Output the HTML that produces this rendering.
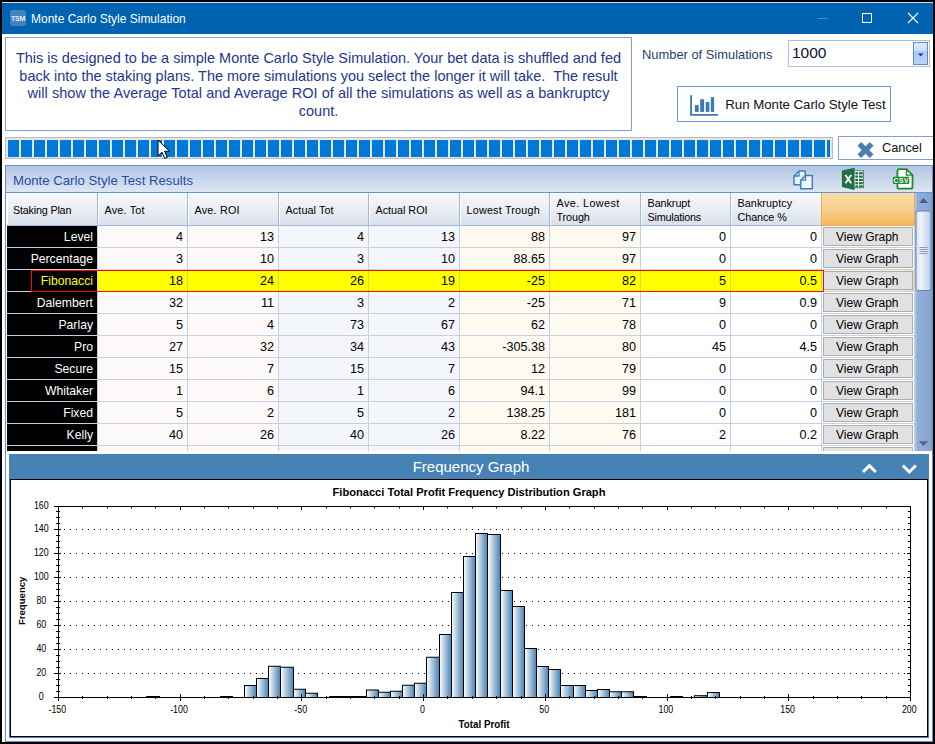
<!DOCTYPE html><html><head><meta charset="utf-8"><title>Monte Carlo Style Simulation</title><style>
*{box-sizing:border-box;margin:0;padding:0}
html,body{width:935px;height:744px;overflow:hidden;background:#fff}
body{position:relative;font-family:"Liberation Sans",sans-serif;color:#000}
.a{position:absolute}
.t{position:absolute;white-space:nowrap;line-height:1}
#frame{left:0;top:0;width:935px;height:744px;border:2px solid #000}
#tbar{left:2px;top:2px;width:931px;height:32px;background:#0063b1;border-top:1px solid #c9dcee}
#tico{left:10px;top:10px;width:16px;height:16px;border-radius:3px;background:#4583bf}
#desc{left:5px;top:37px;width:627px;height:94px;border:1px solid #7f9fd6;background:#fff}
.dl{position:absolute;left:0;width:625px;text-align:center;font-size:14.5px;color:#26368c;white-space:nowrap;line-height:17px}
#combo{left:788px;top:40px;width:142px;height:27px;border:1px solid #abc1e4;background:#fff}
#cbtn{left:913px;top:42px;width:15px;height:23px;border:1px solid #6a88bd;background:linear-gradient(#e0ebfd,#cddffb 36%,#abc9f8 38%,#b8d2fa)}
#run{left:677px;top:86px;width:214px;height:36px;border:1px solid #6f93d3;background:#fff}
#prog{left:5px;top:137px;width:828px;height:22px;border:1px solid #bcbcbc;background:#e6e6e6}
#cancel{left:838px;top:136px;width:97px;height:24px;border:1px solid #7f9fd6;background:#fff}
#panel{left:5px;top:165px;width:928px;height:577px;border:1px solid #6692d5;background:#fff}
#phead{left:6px;top:166px;width:926px;height:27px;background:linear-gradient(#b3c5e2,#c6d4ea 45%,#dde6f3);border-bottom:1px solid #6692d5}
#ghead{left:7px;top:193px;width:908px;height:33px;background:linear-gradient(#f5f7fb,#ebeff6 45%,#d8e0ed)}
.hc{position:absolute;top:193px;height:33px;border-right:1px solid #a3b7d6;border-bottom:1px solid #a3b7d6;box-shadow:inset 1px 1px 0 rgba(255,255,255,.8)}
.ht{position:absolute;white-space:nowrap;font-size:10.8px;line-height:1;color:#000}
.c{position:absolute;height:22px;border-right:1px solid #c5d0e4;border-bottom:1px solid #c5d0e4;font-size:12.6px;text-align:right;padding-right:4px;line-height:22px;white-space:nowrap}
.vb{position:absolute;left:823px;width:90px;height:19px;border:1px solid #adadad;background:#e1e1e1;font-size:12px;text-align:center;line-height:19px;padding-right:1.4px}
</style></head><body><div class="a" id="tbar"></div>
<div class="a" id="tico"></div><div class="t" style="left:10px;top:14.5px;width:16px;text-align:center;font-size:7px;font-weight:bold;color:#e4edf6;letter-spacing:-0.25px">TSM</div>
<div class="t" style="left:31px;top:13px;font-size:12px;color:#fff">Monte Carlo Style Simulation</div>
<svg class="a" style="left:810px;top:8px" width="120" height="20" viewBox="0 0 120 20"><path d="M7.5 10.5H17.5" stroke="#4b8fd0" stroke-width="1" fill="none"/><rect x="52.5" y="5.5" width="9" height="9" stroke="#fff" stroke-width="1" fill="none"/><path d="M98 5L108 15M108 5L98 15" stroke="#fff" stroke-width="1.1" fill="none"/></svg>
<div class="a" id="desc">
<div class="dl" style="top:12.0px;letter-spacing:0px">This is designed to be a simple Monte Carlo Style Simulation. Your bet data is shuffled and fed</div>
<div class="dl" style="top:29.5px;letter-spacing:0px">back into the staking plans. The more simulations you select the longer it will take.&nbsp; The result</div>
<div class="dl" style="top:47.0px;letter-spacing:0.035px">will show the Average Total and Average ROI of all the simulations as well as a bankruptcy</div>
<div class="dl" style="top:64.5px;letter-spacing:0px">count.</div>
</div>
<div class="t" style="left:642px;top:49px;font-size:12.9px;color:#27406f">Number of Simulations</div>
<div class="a" id="combo"></div><div class="t" style="left:792px;top:44.5px;font-size:15.5px;color:#101030">1000</div>
<div class="a" id="cbtn"></div><svg class="a" style="left:917px;top:52.5px" width="8" height="5"><path d="M1 0.4H6.4L3.7 3.6Z" fill="#1f3a7a"/></svg>
<div class="a" id="run"></div>
<svg class="a" style="left:689px;top:92px" width="30" height="26" viewBox="0 0 30 26"><path d="M2.1 3.2V22.9H28.9" stroke="#3c7ab5" stroke-width="1.9" fill="none"/><rect x="5.9" y="13.1" width="3.8" height="6.8" fill="#3c7ab5"/><rect x="11.2" y="7.2" width="3.9" height="12.7" fill="#3c7ab5"/><rect x="16.7" y="10" width="3.7" height="9.9" fill="#3c7ab5"/><rect x="21.8" y="5.2" width="3.3" height="14.7" fill="#3c7ab5"/></svg>
<div class="t" style="left:725.3px;top:97.7px;font-size:13.3px;letter-spacing:-0.05px;color:#111">Run Monte Carlo Style Test</div>
<div class="a" id="prog"></div>
<div class="a" style="left:8px;top:139.5px;width:11px;height:17.5px;background:#0078d7"></div><div class="a" style="left:21px;top:139.5px;width:11px;height:17.5px;background:#0078d7"></div><div class="a" style="left:34px;top:139.5px;width:11px;height:17.5px;background:#0078d7"></div><div class="a" style="left:47px;top:139.5px;width:11px;height:17.5px;background:#0078d7"></div><div class="a" style="left:60px;top:139.5px;width:11px;height:17.5px;background:#0078d7"></div><div class="a" style="left:73px;top:139.5px;width:11px;height:17.5px;background:#0078d7"></div><div class="a" style="left:86px;top:139.5px;width:11px;height:17.5px;background:#0078d7"></div><div class="a" style="left:99px;top:139.5px;width:11px;height:17.5px;background:#0078d7"></div><div class="a" style="left:112px;top:139.5px;width:11px;height:17.5px;background:#0078d7"></div><div class="a" style="left:125px;top:139.5px;width:11px;height:17.5px;background:#0078d7"></div><div class="a" style="left:138px;top:139.5px;width:11px;height:17.5px;background:#0078d7"></div><div class="a" style="left:151px;top:139.5px;width:11px;height:17.5px;background:#0078d7"></div><div class="a" style="left:164px;top:139.5px;width:11px;height:17.5px;background:#0078d7"></div><div class="a" style="left:177px;top:139.5px;width:11px;height:17.5px;background:#0078d7"></div><div class="a" style="left:190px;top:139.5px;width:11px;height:17.5px;background:#0078d7"></div><div class="a" style="left:203px;top:139.5px;width:11px;height:17.5px;background:#0078d7"></div><div class="a" style="left:216px;top:139.5px;width:11px;height:17.5px;background:#0078d7"></div><div class="a" style="left:229px;top:139.5px;width:11px;height:17.5px;background:#0078d7"></div><div class="a" style="left:242px;top:139.5px;width:11px;height:17.5px;background:#0078d7"></div><div class="a" style="left:255px;top:139.5px;width:11px;height:17.5px;background:#0078d7"></div><div class="a" style="left:268px;top:139.5px;width:11px;height:17.5px;background:#0078d7"></div><div class="a" style="left:281px;top:139.5px;width:11px;height:17.5px;background:#0078d7"></div><div class="a" style="left:294px;top:139.5px;width:11px;height:17.5px;background:#0078d7"></div><div class="a" style="left:307px;top:139.5px;width:11px;height:17.5px;background:#0078d7"></div><div class="a" style="left:320px;top:139.5px;width:11px;height:17.5px;background:#0078d7"></div><div class="a" style="left:333px;top:139.5px;width:11px;height:17.5px;background:#0078d7"></div><div class="a" style="left:346px;top:139.5px;width:11px;height:17.5px;background:#0078d7"></div><div class="a" style="left:359px;top:139.5px;width:11px;height:17.5px;background:#0078d7"></div><div class="a" style="left:372px;top:139.5px;width:11px;height:17.5px;background:#0078d7"></div><div class="a" style="left:385px;top:139.5px;width:11px;height:17.5px;background:#0078d7"></div><div class="a" style="left:398px;top:139.5px;width:11px;height:17.5px;background:#0078d7"></div><div class="a" style="left:411px;top:139.5px;width:11px;height:17.5px;background:#0078d7"></div><div class="a" style="left:424px;top:139.5px;width:11px;height:17.5px;background:#0078d7"></div><div class="a" style="left:437px;top:139.5px;width:11px;height:17.5px;background:#0078d7"></div><div class="a" style="left:450px;top:139.5px;width:11px;height:17.5px;background:#0078d7"></div><div class="a" style="left:463px;top:139.5px;width:11px;height:17.5px;background:#0078d7"></div><div class="a" style="left:476px;top:139.5px;width:11px;height:17.5px;background:#0078d7"></div><div class="a" style="left:489px;top:139.5px;width:11px;height:17.5px;background:#0078d7"></div><div class="a" style="left:502px;top:139.5px;width:11px;height:17.5px;background:#0078d7"></div><div class="a" style="left:515px;top:139.5px;width:11px;height:17.5px;background:#0078d7"></div><div class="a" style="left:528px;top:139.5px;width:11px;height:17.5px;background:#0078d7"></div><div class="a" style="left:541px;top:139.5px;width:11px;height:17.5px;background:#0078d7"></div><div class="a" style="left:554px;top:139.5px;width:11px;height:17.5px;background:#0078d7"></div><div class="a" style="left:567px;top:139.5px;width:11px;height:17.5px;background:#0078d7"></div><div class="a" style="left:580px;top:139.5px;width:11px;height:17.5px;background:#0078d7"></div><div class="a" style="left:593px;top:139.5px;width:11px;height:17.5px;background:#0078d7"></div><div class="a" style="left:606px;top:139.5px;width:11px;height:17.5px;background:#0078d7"></div><div class="a" style="left:619px;top:139.5px;width:11px;height:17.5px;background:#0078d7"></div><div class="a" style="left:632px;top:139.5px;width:11px;height:17.5px;background:#0078d7"></div><div class="a" style="left:645px;top:139.5px;width:11px;height:17.5px;background:#0078d7"></div><div class="a" style="left:658px;top:139.5px;width:11px;height:17.5px;background:#0078d7"></div><div class="a" style="left:671px;top:139.5px;width:11px;height:17.5px;background:#0078d7"></div><div class="a" style="left:684px;top:139.5px;width:11px;height:17.5px;background:#0078d7"></div><div class="a" style="left:697px;top:139.5px;width:11px;height:17.5px;background:#0078d7"></div><div class="a" style="left:710px;top:139.5px;width:11px;height:17.5px;background:#0078d7"></div><div class="a" style="left:723px;top:139.5px;width:11px;height:17.5px;background:#0078d7"></div><div class="a" style="left:736px;top:139.5px;width:11px;height:17.5px;background:#0078d7"></div><div class="a" style="left:749px;top:139.5px;width:11px;height:17.5px;background:#0078d7"></div><div class="a" style="left:762px;top:139.5px;width:11px;height:17.5px;background:#0078d7"></div><div class="a" style="left:775px;top:139.5px;width:11px;height:17.5px;background:#0078d7"></div><div class="a" style="left:788px;top:139.5px;width:11px;height:17.5px;background:#0078d7"></div><div class="a" style="left:801px;top:139.5px;width:11px;height:17.5px;background:#0078d7"></div><div class="a" style="left:814px;top:139.5px;width:11px;height:17.5px;background:#0078d7"></div><div class="a" style="left:827px;top:139.5px;width:3px;height:17.5px;background:#0078d7"></div>
<div class="a" id="cancel"></div>
<svg class="a" style="left:855px;top:140px" width="21" height="20" viewBox="0 0 21 20"><path d="M4.3 3.8L16.7 16.2M16.7 3.8L4.3 16.2" stroke="#4a7fb5" stroke-width="5.2" fill="none"/></svg>
<div class="t" style="left:882px;top:142px;font-size:12.8px;color:#111">Cancel</div>
<svg class="a" style="left:157px;top:139px" width="14" height="21" viewBox="0 0 14 21"><path d="M1 1V17L5 13.2L7.8 19.5L10.3 18.4L7.6 12.3H12.6Z" fill="#fff" stroke="#000" stroke-width="1"/></svg>
<div class="a" id="panel"></div><div class="a" id="phead"></div>
<div class="t" style="left:13px;top:174px;font-size:13.1px;letter-spacing:0.04px;color:#1f4fa3">Monte Carlo Style Test Results</div>
<svg class="a" style="left:792px;top:168px" width="24" height="24" viewBox="0 0 24 24"><g stroke-linejoin="round"><path d="M7 3H13.2V16.7H2V8Z" fill="#e9f0fa" stroke="#3f7fc0" stroke-width="1.5"/><path d="M7 3V8H2" fill="none" stroke="#3f7fc0" stroke-width="1.3"/><path d="M13.5 7.5H20.3V20.8H8.8V12.2Z" fill="#f2f6fc" stroke="#3f7fc0" stroke-width="1.5"/><path d="M13.5 7.5V12.2H8.8" fill="none" stroke="#3f7fc0" stroke-width="1.3"/></g></svg>
<svg class="a" style="left:841px;top:167px" width="25" height="24" viewBox="0 0 25 24"><rect x="12" y="3.8" width="10.6" height="16.9" fill="#fff" stroke="#2a7b4c" stroke-width="0.8"/><g fill="#1f7145"><rect x="14.3" y="5.2" width="2.8" height="2.2"/><rect x="18" y="5.2" width="3.8" height="2.2"/><rect x="14.3" y="8.5" width="2.8" height="2.2"/><rect x="18" y="8.5" width="3.8" height="2.2"/><rect x="14.3" y="11.8" width="2.8" height="2.2"/><rect x="18" y="11.8" width="3.8" height="2.2"/><rect x="14.3" y="15.1" width="2.8" height="2.2"/><rect x="18" y="15.1" width="3.8" height="2.2"/><rect x="14.3" y="18.3" width="2.8" height="1.8"/><rect x="18" y="18.3" width="3.8" height="1.8"/></g><path d="M0.9 3.5L13.6 0.8V23L0.9 20Z" fill="#1f7145"/><path d="M4.4 8L10.2 16.2M10.2 8L4.4 16.2" stroke="#fff" stroke-width="1.9"/></svg>
<svg class="a" style="left:891px;top:167px" width="24" height="24" viewBox="0 0 24 24"><path d="M8.4 2.1H15.5L21.5 8.1V19.7Q21.5 21.7 19.5 21.7H8.4Q6.4 21.7 6.4 19.7V4.1Q6.4 2.1 8.4 2.1Z" fill="#fff" stroke="#1e8c2e" stroke-width="1.8"/><path d="M15.5 2.1V8.1H21.5" fill="none" stroke="#1e8c2e" stroke-width="1.4"/><rect x="1.8" y="9.8" width="16.5" height="7.2" rx="1.2" fill="#1e8c2e"/><text x="10.2" y="15.9" font-size="6.6" font-weight="bold" fill="#fff" text-anchor="middle" letter-spacing="0.6" font-family="Liberation Sans, sans-serif">CSV</text></svg>
<div class="a" id="ghead"></div>
<div class="hc" style="left:7px;width:91px;"></div>
<div class="ht" style="left:13px;top:205.2px;letter-spacing:-0.2px">Staking Plan</div>
<div class="hc" style="left:98px;width:90px;"></div>
<div class="ht" style="left:104.5px;top:205.2px;letter-spacing:0.2px">Ave. Tot</div>
<div class="hc" style="left:188px;width:91px;"></div>
<div class="ht" style="left:194.5px;top:205.2px;letter-spacing:0.2px">Ave. ROI</div>
<div class="hc" style="left:279px;width:90px;"></div>
<div class="ht" style="left:285.5px;top:205.2px;letter-spacing:0.1px">Actual Tot</div>
<div class="hc" style="left:369px;width:91px;"></div>
<div class="ht" style="left:375.5px;top:205.2px;letter-spacing:-0.02px">Actual ROI</div>
<div class="hc" style="left:460px;width:90px;"></div>
<div class="ht" style="left:466.5px;top:205.2px;letter-spacing:0.2px">Lowest Trough</div>
<div class="hc" style="left:550px;width:91px;"></div>
<div class="ht" style="left:556.5px;top:198px;letter-spacing:0.42px">Ave. Lowest</div>
<div class="ht" style="left:556.5px;top:211.8px;letter-spacing:-0.1px">Trough</div>
<div class="hc" style="left:641px;width:90px;"></div>
<div class="ht" style="left:647.5px;top:198px;letter-spacing:-0.06px">Bankrupt</div>
<div class="ht" style="left:647.5px;top:211.8px;letter-spacing:-0.22px">Simulations</div>
<div class="hc" style="left:731px;width:91px;"></div>
<div class="ht" style="left:737.5px;top:198px;letter-spacing:0.06px">Bankruptcy</div>
<div class="ht" style="left:737.5px;top:211.8px;letter-spacing:-0.08px">Chance %</div>
<div class="hc" style="left:821px;width:94px;background:linear-gradient(#fadba6,#f8d08e 50%,#f5bd68 88%,#f3b359);border-left:1px solid #f0ac50;border-right:1px solid #eeaa52;border-bottom:1px solid #eeaa52;box-shadow:none;"></div>
<div class="a" style="left:7px;top:226px;width:908px;height:225px;overflow:hidden">
<div class="c" style="left:0px;top:0px;width:91px;background:#000;color:#fff;font-size:12.2px;">Level</div>
<div class="c" style="left:91px;top:0px;width:90px;background:#fdf9f8;color:#000;">4</div>
<div class="c" style="left:181px;top:0px;width:91px;background:#fdf9f8;color:#000;">13</div>
<div class="c" style="left:272px;top:0px;width:90px;background:#f4f6fb;color:#000;">4</div>
<div class="c" style="left:362px;top:0px;width:91px;background:#f4f6fb;color:#000;">13</div>
<div class="c" style="left:453px;top:0px;width:90px;background:#fffaf0;color:#000;">88</div>
<div class="c" style="left:543px;top:0px;width:91px;background:#fffaf0;color:#000;">97</div>
<div class="c" style="left:634px;top:0px;width:90px;background:#fff;color:#000;">0</div>
<div class="c" style="left:724px;top:0px;width:91px;background:#fff;color:#000;">0</div>
<div class="c" style="left:815px;top:0px;width:93px;background:#fff"></div>
<div class="vb" style="left:816px;top:1px">View Graph</div>
<div class="c" style="left:0px;top:22px;width:91px;background:#000;color:#fff;font-size:12.2px;">Percentage</div>
<div class="c" style="left:91px;top:22px;width:90px;background:#fdf9f8;color:#000;">3</div>
<div class="c" style="left:181px;top:22px;width:91px;background:#fdf9f8;color:#000;">10</div>
<div class="c" style="left:272px;top:22px;width:90px;background:#f4f6fb;color:#000;">3</div>
<div class="c" style="left:362px;top:22px;width:91px;background:#f4f6fb;color:#000;">10</div>
<div class="c" style="left:453px;top:22px;width:90px;background:#fffaf0;color:#000;">88.65</div>
<div class="c" style="left:543px;top:22px;width:91px;background:#fffaf0;color:#000;">97</div>
<div class="c" style="left:634px;top:22px;width:90px;background:#fff;color:#000;">0</div>
<div class="c" style="left:724px;top:22px;width:91px;background:#fff;color:#000;">0</div>
<div class="c" style="left:815px;top:22px;width:93px;background:#fff"></div>
<div class="vb" style="left:816px;top:23px">View Graph</div>
<div class="c" style="left:0px;top:44px;width:91px;background:#000;color:#ffff10;font-size:12.2px;">Fibonacci</div>
<div class="c" style="left:91px;top:44px;width:90px;background:#ffff00;color:#000;border-right:1px solid #d8d850;">18</div>
<div class="c" style="left:181px;top:44px;width:91px;background:#ffff00;color:#000;border-right:1px solid #d8d850;">24</div>
<div class="c" style="left:272px;top:44px;width:90px;background:#ffff00;color:#000;border-right:1px solid #d8d850;">26</div>
<div class="c" style="left:362px;top:44px;width:91px;background:#ffff00;color:#000;border-right:1px solid #d8d850;">19</div>
<div class="c" style="left:453px;top:44px;width:90px;background:#ffff00;color:#000;border-right:1px solid #d8d850;">-25</div>
<div class="c" style="left:543px;top:44px;width:91px;background:#ffff00;color:#000;border-right:1px solid #d8d850;">82</div>
<div class="c" style="left:634px;top:44px;width:90px;background:#ffff00;color:#000;border-right:1px solid #d8d850;">5</div>
<div class="c" style="left:724px;top:44px;width:91px;background:#ffff00;color:#000;border-right:1px solid #d8d850;">0.5</div>
<div class="c" style="left:815px;top:44px;width:93px;background:linear-gradient(90deg,#fdebc5,#fdebc5 88%,#fbd28a)"></div>
<div class="vb" style="left:816px;top:45px">View Graph</div>
<div class="c" style="left:0px;top:66px;width:91px;background:#000;color:#fff;font-size:12.2px;">Dalembert</div>
<div class="c" style="left:91px;top:66px;width:90px;background:#fdf9f8;color:#000;">32</div>
<div class="c" style="left:181px;top:66px;width:91px;background:#fdf9f8;color:#000;">11</div>
<div class="c" style="left:272px;top:66px;width:90px;background:#f4f6fb;color:#000;">3</div>
<div class="c" style="left:362px;top:66px;width:91px;background:#f4f6fb;color:#000;">2</div>
<div class="c" style="left:453px;top:66px;width:90px;background:#fffaf0;color:#000;">-25</div>
<div class="c" style="left:543px;top:66px;width:91px;background:#fffaf0;color:#000;">71</div>
<div class="c" style="left:634px;top:66px;width:90px;background:#fff;color:#000;">9</div>
<div class="c" style="left:724px;top:66px;width:91px;background:#fff;color:#000;">0.9</div>
<div class="c" style="left:815px;top:66px;width:93px;background:#fff"></div>
<div class="vb" style="left:816px;top:67px">View Graph</div>
<div class="c" style="left:0px;top:88px;width:91px;background:#000;color:#fff;font-size:12.2px;">Parlay</div>
<div class="c" style="left:91px;top:88px;width:90px;background:#fdf9f8;color:#000;">5</div>
<div class="c" style="left:181px;top:88px;width:91px;background:#fdf9f8;color:#000;">4</div>
<div class="c" style="left:272px;top:88px;width:90px;background:#f4f6fb;color:#000;">73</div>
<div class="c" style="left:362px;top:88px;width:91px;background:#f4f6fb;color:#000;">67</div>
<div class="c" style="left:453px;top:88px;width:90px;background:#fffaf0;color:#000;">62</div>
<div class="c" style="left:543px;top:88px;width:91px;background:#fffaf0;color:#000;">78</div>
<div class="c" style="left:634px;top:88px;width:90px;background:#fff;color:#000;">0</div>
<div class="c" style="left:724px;top:88px;width:91px;background:#fff;color:#000;">0</div>
<div class="c" style="left:815px;top:88px;width:93px;background:#fff"></div>
<div class="vb" style="left:816px;top:89px">View Graph</div>
<div class="c" style="left:0px;top:110px;width:91px;background:#000;color:#fff;font-size:12.2px;">Pro</div>
<div class="c" style="left:91px;top:110px;width:90px;background:#fdf9f8;color:#000;">27</div>
<div class="c" style="left:181px;top:110px;width:91px;background:#fdf9f8;color:#000;">32</div>
<div class="c" style="left:272px;top:110px;width:90px;background:#f4f6fb;color:#000;">34</div>
<div class="c" style="left:362px;top:110px;width:91px;background:#f4f6fb;color:#000;">43</div>
<div class="c" style="left:453px;top:110px;width:90px;background:#fffaf0;color:#000;">-305.38</div>
<div class="c" style="left:543px;top:110px;width:91px;background:#fffaf0;color:#000;">80</div>
<div class="c" style="left:634px;top:110px;width:90px;background:#fff;color:#000;">45</div>
<div class="c" style="left:724px;top:110px;width:91px;background:#fff;color:#000;">4.5</div>
<div class="c" style="left:815px;top:110px;width:93px;background:#fff"></div>
<div class="vb" style="left:816px;top:111px">View Graph</div>
<div class="c" style="left:0px;top:132px;width:91px;background:#000;color:#fff;font-size:12.2px;">Secure</div>
<div class="c" style="left:91px;top:132px;width:90px;background:#fdf9f8;color:#000;">15</div>
<div class="c" style="left:181px;top:132px;width:91px;background:#fdf9f8;color:#000;">7</div>
<div class="c" style="left:272px;top:132px;width:90px;background:#f4f6fb;color:#000;">15</div>
<div class="c" style="left:362px;top:132px;width:91px;background:#f4f6fb;color:#000;">7</div>
<div class="c" style="left:453px;top:132px;width:90px;background:#fffaf0;color:#000;">12</div>
<div class="c" style="left:543px;top:132px;width:91px;background:#fffaf0;color:#000;">79</div>
<div class="c" style="left:634px;top:132px;width:90px;background:#fff;color:#000;">0</div>
<div class="c" style="left:724px;top:132px;width:91px;background:#fff;color:#000;">0</div>
<div class="c" style="left:815px;top:132px;width:93px;background:#fff"></div>
<div class="vb" style="left:816px;top:133px">View Graph</div>
<div class="c" style="left:0px;top:154px;width:91px;background:#000;color:#fff;font-size:12.2px;">Whitaker</div>
<div class="c" style="left:91px;top:154px;width:90px;background:#fdf9f8;color:#000;">1</div>
<div class="c" style="left:181px;top:154px;width:91px;background:#fdf9f8;color:#000;">6</div>
<div class="c" style="left:272px;top:154px;width:90px;background:#f4f6fb;color:#000;">1</div>
<div class="c" style="left:362px;top:154px;width:91px;background:#f4f6fb;color:#000;">6</div>
<div class="c" style="left:453px;top:154px;width:90px;background:#fffaf0;color:#000;">94.1</div>
<div class="c" style="left:543px;top:154px;width:91px;background:#fffaf0;color:#000;">99</div>
<div class="c" style="left:634px;top:154px;width:90px;background:#fff;color:#000;">0</div>
<div class="c" style="left:724px;top:154px;width:91px;background:#fff;color:#000;">0</div>
<div class="c" style="left:815px;top:154px;width:93px;background:#fff"></div>
<div class="vb" style="left:816px;top:155px">View Graph</div>
<div class="c" style="left:0px;top:176px;width:91px;background:#000;color:#fff;font-size:12.2px;">Fixed</div>
<div class="c" style="left:91px;top:176px;width:90px;background:#fdf9f8;color:#000;">5</div>
<div class="c" style="left:181px;top:176px;width:91px;background:#fdf9f8;color:#000;">2</div>
<div class="c" style="left:272px;top:176px;width:90px;background:#f4f6fb;color:#000;">5</div>
<div class="c" style="left:362px;top:176px;width:91px;background:#f4f6fb;color:#000;">2</div>
<div class="c" style="left:453px;top:176px;width:90px;background:#fffaf0;color:#000;">138.25</div>
<div class="c" style="left:543px;top:176px;width:91px;background:#fffaf0;color:#000;">181</div>
<div class="c" style="left:634px;top:176px;width:90px;background:#fff;color:#000;">0</div>
<div class="c" style="left:724px;top:176px;width:91px;background:#fff;color:#000;">0</div>
<div class="c" style="left:815px;top:176px;width:93px;background:#fff"></div>
<div class="vb" style="left:816px;top:177px">View Graph</div>
<div class="c" style="left:0px;top:198px;width:91px;background:#000;color:#fff;font-size:12.2px;">Kelly</div>
<div class="c" style="left:91px;top:198px;width:90px;background:#fdf9f8;color:#000;">40</div>
<div class="c" style="left:181px;top:198px;width:91px;background:#fdf9f8;color:#000;">26</div>
<div class="c" style="left:272px;top:198px;width:90px;background:#f4f6fb;color:#000;">40</div>
<div class="c" style="left:362px;top:198px;width:91px;background:#f4f6fb;color:#000;">26</div>
<div class="c" style="left:453px;top:198px;width:90px;background:#fffaf0;color:#000;">8.22</div>
<div class="c" style="left:543px;top:198px;width:91px;background:#fffaf0;color:#000;">76</div>
<div class="c" style="left:634px;top:198px;width:90px;background:#fff;color:#000;">2</div>
<div class="c" style="left:724px;top:198px;width:91px;background:#fff;color:#000;">0.2</div>
<div class="c" style="left:815px;top:198px;width:93px;background:#fff"></div>
<div class="vb" style="left:816px;top:199px">View Graph</div>
<div class="c" style="left:0px;top:220px;width:91px;background:#000;color:#fff;font-size:12.2px;"></div>
<div class="c" style="left:91px;top:220px;width:90px;background:#fdf9f8;color:#000;"></div>
<div class="c" style="left:181px;top:220px;width:91px;background:#fdf9f8;color:#000;"></div>
<div class="c" style="left:272px;top:220px;width:90px;background:#f4f6fb;color:#000;"></div>
<div class="c" style="left:362px;top:220px;width:91px;background:#f4f6fb;color:#000;"></div>
<div class="c" style="left:453px;top:220px;width:90px;background:#fffaf0;color:#000;"></div>
<div class="c" style="left:543px;top:220px;width:91px;background:#fffaf0;color:#000;"></div>
<div class="c" style="left:634px;top:220px;width:90px;background:#fff;color:#000;"></div>
<div class="c" style="left:724px;top:220px;width:91px;background:#fff;color:#000;"></div>
<div class="c" style="left:815px;top:220px;width:93px;background:#fff"></div>
<div class="vb" style="left:816px;top:221px">View Graph</div>
<div class="a" style="left:24px;top:44px;width:793px;height:22px;border:1px solid #f80808"></div>
</div>
<div class="a" style="left:915px;top:193px;width:17px;height:258px;background:linear-gradient(90deg,#b4caea,#92aed8 14%,#8eabd6 55%,#819fcf)"></div>
<svg class="a" style="left:915px;top:193px" width="17" height="258" viewBox="0 0 17 258"><path d="M4 10H13L8.5 5.1Z" fill="#4d5d8c"/><path d="M3.8 248.3H13.2L8.5 253Z" fill="#56648a"/><defs><linearGradient id="th" x1="0" x2="1" y1="0" y2="0"><stop offset="0" stop-color="#d6e2f3"/><stop offset="0.3" stop-color="#f0f4fb"/><stop offset="0.65" stop-color="#d6e1f1"/><stop offset="1" stop-color="#b7c9e6"/></linearGradient></defs><rect x="1" y="18" width="15" height="79.5" rx="2" fill="url(#th)" stroke="#6381b8"/><path d="M4.5 54.5H12.5M4.5 56.5H12.5M4.5 58.5H12.5M4.5 60.5H12.5" stroke="#8b9dc2" stroke-width="1"/></svg>
<div class="a" style="left:6px;top:451px;width:926px;height:290px;background:#fff"></div>
<div class="a" style="left:9px;top:454px;width:920px;height:284px;background:#4682b4"></div>
<div class="t" style="left:9px;top:459px;width:920px;text-align:center;font-size:15px;color:#fff;padding-left:4px">Frequency Graph</div>
<svg class="a" style="left:858px;top:459px" width="64" height="18" viewBox="0 0 64 18"><path d="M5 13L11.4 6.6L17.8 13" stroke="#fff" stroke-width="3" fill="none"/><path d="M44.8 6.5L51.3 13L57.8 6.5" stroke="#fff" stroke-width="3" fill="none"/></svg>
<div class="a" style="left:10px;top:478.6px;width:918px;height:258.4px;background:#fff;border:1px solid #000;border-top-width:1.2px"></div>
<svg class="a" style="left:0;top:480px" width="935" height="256" viewBox="0 480 935 256" font-family="Liberation Sans, sans-serif"><defs><linearGradient id="bg" x1="0" x2="1" y1="0" y2="0"><stop offset="0" stop-color="#ffffff"/><stop offset="1" stop-color="#4682b4"/></linearGradient></defs><text x="469" y="496" font-size="11.1" font-weight="bold" text-anchor="middle" fill="#000">Fibonacci Total Profit Frequency Distribution Graph</text><path d="M58.0 673.5H910.5" stroke="#000" stroke-width="1" stroke-dasharray="1 5" fill="none"/><path d="M58.0 649.5H910.5" stroke="#000" stroke-width="1" stroke-dasharray="1 5" fill="none"/><path d="M58.0 625.5H910.5" stroke="#000" stroke-width="1" stroke-dasharray="1 5" fill="none"/><path d="M58.0 601.5H910.5" stroke="#000" stroke-width="1" stroke-dasharray="1 5" fill="none"/><path d="M58.0 577.5H910.5" stroke="#000" stroke-width="1" stroke-dasharray="1 5" fill="none"/><path d="M58.0 553.5H910.5" stroke="#000" stroke-width="1" stroke-dasharray="1 5" fill="none"/><path d="M58.0 529.5H910.5" stroke="#000" stroke-width="1" stroke-dasharray="1 5" fill="none"/><rect x="146.5" y="696.50" width="13.0" height="1.00" fill="url(#bg)" stroke="#000" stroke-width="1"/><rect x="220.5" y="696.50" width="12.0" height="1.00" fill="url(#bg)" stroke="#000" stroke-width="1"/><rect x="244.5" y="685.50" width="12.0" height="12.00" fill="url(#bg)" stroke="#000" stroke-width="1"/><rect x="256.5" y="678.50" width="12.0" height="19.00" fill="url(#bg)" stroke="#000" stroke-width="1"/><rect x="268.5" y="666.25" width="12.0" height="31.25" fill="url(#bg)" stroke="#000" stroke-width="1"/><rect x="280.5" y="667.25" width="13.0" height="30.25" fill="url(#bg)" stroke="#000" stroke-width="1"/><rect x="293.5" y="689.25" width="12.0" height="8.25" fill="url(#bg)" stroke="#000" stroke-width="1"/><rect x="305.5" y="693.25" width="12.0" height="4.25" fill="url(#bg)" stroke="#000" stroke-width="1"/><rect x="329.5" y="696.50" width="12.0" height="1.00" fill="url(#bg)" stroke="#000" stroke-width="1"/><rect x="341.5" y="696.50" width="12.0" height="1.00" fill="url(#bg)" stroke="#000" stroke-width="1"/><rect x="353.5" y="696.50" width="13.0" height="1.00" fill="url(#bg)" stroke="#000" stroke-width="1"/><rect x="366.5" y="690.00" width="12.0" height="7.50" fill="url(#bg)" stroke="#000" stroke-width="1"/><rect x="378.5" y="692.25" width="12.0" height="5.25" fill="url(#bg)" stroke="#000" stroke-width="1"/><rect x="390.5" y="691.25" width="12.0" height="6.25" fill="url(#bg)" stroke="#000" stroke-width="1"/><rect x="402.5" y="685.25" width="12.0" height="12.25" fill="url(#bg)" stroke="#000" stroke-width="1"/><rect x="414.5" y="683.25" width="12.0" height="14.25" fill="url(#bg)" stroke="#000" stroke-width="1"/><rect x="426.5" y="657.25" width="13.0" height="40.25" fill="url(#bg)" stroke="#000" stroke-width="1"/><rect x="439.5" y="634.50" width="12.0" height="63.00" fill="url(#bg)" stroke="#000" stroke-width="1"/><rect x="451.5" y="592.50" width="12.0" height="105.00" fill="url(#bg)" stroke="#000" stroke-width="1"/><rect x="463.5" y="556.50" width="12.0" height="141.00" fill="url(#bg)" stroke="#000" stroke-width="1"/><rect x="475.5" y="533.50" width="12.0" height="164.00" fill="url(#bg)" stroke="#000" stroke-width="1"/><rect x="487.5" y="534.50" width="13.0" height="163.00" fill="url(#bg)" stroke="#000" stroke-width="1"/><rect x="500.5" y="590.50" width="12.0" height="107.00" fill="url(#bg)" stroke="#000" stroke-width="1"/><rect x="512.5" y="606.50" width="12.0" height="91.00" fill="url(#bg)" stroke="#000" stroke-width="1"/><rect x="524.5" y="648.50" width="12.0" height="49.00" fill="url(#bg)" stroke="#000" stroke-width="1"/><rect x="536.5" y="666.50" width="12.0" height="31.00" fill="url(#bg)" stroke="#000" stroke-width="1"/><rect x="548.5" y="669.50" width="12.0" height="28.00" fill="url(#bg)" stroke="#000" stroke-width="1"/><rect x="560.5" y="685.50" width="13.0" height="12.00" fill="url(#bg)" stroke="#000" stroke-width="1"/><rect x="573.5" y="685.50" width="12.0" height="12.00" fill="url(#bg)" stroke="#000" stroke-width="1"/><rect x="585.5" y="690.50" width="12.0" height="7.00" fill="url(#bg)" stroke="#000" stroke-width="1"/><rect x="597.5" y="689.50" width="12.0" height="8.00" fill="url(#bg)" stroke="#000" stroke-width="1"/><rect x="609.5" y="691.75" width="12.0" height="5.75" fill="url(#bg)" stroke="#000" stroke-width="1"/><rect x="621.5" y="691.75" width="12.0" height="5.75" fill="url(#bg)" stroke="#000" stroke-width="1"/><rect x="633.5" y="696.50" width="13.0" height="1.00" fill="url(#bg)" stroke="#000" stroke-width="1"/><rect x="670.5" y="696.50" width="12.0" height="1.00" fill="url(#bg)" stroke="#000" stroke-width="1"/><rect x="694.5" y="695.70" width="13.0" height="1.80" fill="url(#bg)" stroke="#000" stroke-width="1"/><rect x="707.5" y="692.50" width="12.0" height="5.00" fill="url(#bg)" stroke="#000" stroke-width="1"/><rect x="58.5" y="506.5" width="852.0" height="191.0" fill="none" stroke="#000" stroke-width="1"/><path d="M58.5 694.0V701.0M58.5 506.5V510.0M82.5 696.0V699.0M82.5 506.5V508.5M107.5 696.0V699.0M107.5 506.5V508.5M131.5 696.0V699.0M131.5 506.5V508.5M155.5 696.0V699.0M155.5 506.5V508.5M180.5 694.0V701.0M180.5 506.5V510.0M204.5 696.0V699.0M204.5 506.5V508.5M228.5 696.0V699.0M228.5 506.5V508.5M253.5 696.0V699.0M253.5 506.5V508.5M277.5 696.0V699.0M277.5 506.5V508.5M301.5 694.0V701.0M301.5 506.5V510.0M326.5 696.0V699.0M326.5 506.5V508.5M350.5 696.0V699.0M350.5 506.5V508.5M374.5 696.0V699.0M374.5 506.5V508.5M399.5 696.0V699.0M399.5 506.5V508.5M423.5 694.0V701.0M423.5 506.5V510.0M447.5 696.0V699.0M447.5 506.5V508.5M472.5 696.0V699.0M472.5 506.5V508.5M496.5 696.0V699.0M496.5 506.5V508.5M521.5 696.0V699.0M521.5 506.5V508.5M545.5 694.0V701.0M545.5 506.5V510.0M569.5 696.0V699.0M569.5 506.5V508.5M594.5 696.0V699.0M594.5 506.5V508.5M618.5 696.0V699.0M618.5 506.5V508.5M642.5 696.0V699.0M642.5 506.5V508.5M667.5 694.0V701.0M667.5 506.5V510.0M691.5 696.0V699.0M691.5 506.5V508.5M715.5 696.0V699.0M715.5 506.5V508.5M740.5 696.0V699.0M740.5 506.5V508.5M764.5 696.0V699.0M764.5 506.5V508.5M788.5 694.0V701.0M788.5 506.5V510.0M813.5 696.0V699.0M813.5 506.5V508.5M837.5 696.0V699.0M837.5 506.5V508.5M861.5 696.0V699.0M861.5 506.5V508.5M886.5 696.0V699.0M886.5 506.5V508.5M910.5 694.0V701.0M910.5 506.5V510.0M54.0 697.5H61.0M907.0 697.5H910.5M56.0 691.5H60.0M908.0 691.5H910.5M56.0 685.5H60.0M908.0 685.5H910.5M56.0 679.5H60.0M908.0 679.5H910.5M54.0 673.5H61.0M907.0 673.5H910.5M56.0 667.5H60.0M908.0 667.5H910.5M56.0 661.5H60.0M908.0 661.5H910.5M56.0 655.5H60.0M908.0 655.5H910.5M54.0 649.5H61.0M907.0 649.5H910.5M56.0 643.5H60.0M908.0 643.5H910.5M56.0 637.5H60.0M908.0 637.5H910.5M56.0 631.5H60.0M908.0 631.5H910.5M54.0 625.5H61.0M907.0 625.5H910.5M56.0 619.5H60.0M908.0 619.5H910.5M56.0 613.5H60.0M908.0 613.5H910.5M56.0 607.5H60.0M908.0 607.5H910.5M54.0 601.5H61.0M907.0 601.5H910.5M56.0 595.5H60.0M908.0 595.5H910.5M56.0 589.5H60.0M908.0 589.5H910.5M56.0 583.5H60.0M908.0 583.5H910.5M54.0 577.5H61.0M907.0 577.5H910.5M56.0 571.5H60.0M908.0 571.5H910.5M56.0 565.5H60.0M908.0 565.5H910.5M56.0 559.5H60.0M908.0 559.5H910.5M54.0 553.5H61.0M907.0 553.5H910.5M56.0 547.5H60.0M908.0 547.5H910.5M56.0 541.5H60.0M908.0 541.5H910.5M56.0 535.5H60.0M908.0 535.5H910.5M54.0 529.5H61.0M907.0 529.5H910.5M56.0 523.5H60.0M908.0 523.5H910.5M56.0 517.5H60.0M908.0 517.5H910.5M56.0 511.5H60.0M908.0 511.5H910.5M54.0 506.5H61.0M907.0 506.5H910.5" stroke="#000" stroke-width="1" fill="none"/><text transform="translate(41.3 700.4) scale(0.86 1)" font-size="10.3" text-anchor="middle">0</text><text transform="translate(41.3 676.4) scale(0.86 1)" font-size="10.3" text-anchor="middle">20</text><text transform="translate(41.3 652.4) scale(0.86 1)" font-size="10.3" text-anchor="middle">40</text><text transform="translate(41.3 628.4) scale(0.86 1)" font-size="10.3" text-anchor="middle">60</text><text transform="translate(41.3 604.4) scale(0.86 1)" font-size="10.3" text-anchor="middle">80</text><text transform="translate(41.3 580.4) scale(0.86 1)" font-size="10.3" text-anchor="middle">100</text><text transform="translate(41.3 556.4) scale(0.86 1)" font-size="10.3" text-anchor="middle">120</text><text transform="translate(41.3 532.4) scale(0.86 1)" font-size="10.3" text-anchor="middle">140</text><text transform="translate(41.3 509.4) scale(0.86 1)" font-size="10.3" text-anchor="middle">160</text><text transform="translate(57.3 713) scale(0.86 1)" font-size="10.3" text-anchor="middle">-150</text><text transform="translate(179.0 713) scale(0.86 1)" font-size="10.3" text-anchor="middle">-100</text><text transform="translate(300.7 713) scale(0.86 1)" font-size="10.3" text-anchor="middle">-50</text><text transform="translate(422.4 713) scale(0.86 1)" font-size="10.3" text-anchor="middle">0</text><text transform="translate(544.2 713) scale(0.86 1)" font-size="10.3" text-anchor="middle">50</text><text transform="translate(665.9 713) scale(0.86 1)" font-size="10.3" text-anchor="middle">100</text><text transform="translate(787.6 713) scale(0.86 1)" font-size="10.3" text-anchor="middle">150</text><text transform="translate(909.3 713) scale(0.86 1)" font-size="10.3" text-anchor="middle">200</text><text transform="translate(484 727.6) scale(0.95 1)" font-size="10.3" font-weight="bold" text-anchor="middle">Total Profit</text><text transform="translate(24.5 600.8) rotate(-90)" font-size="9.6" font-weight="bold" text-anchor="middle">Frequency</text></svg>
<div class="a" id="frame"></div></body></html>
